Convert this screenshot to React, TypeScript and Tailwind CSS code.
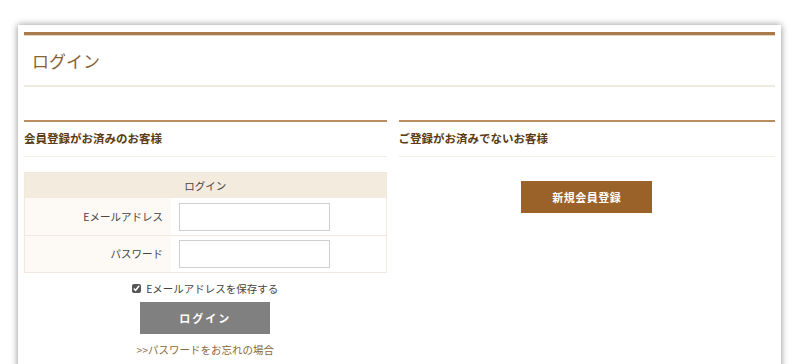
import React from "react";

const jp = { fontFamily: '"Noto Sans CJK JP", "Noto Sans", sans-serif' };

export default function App() {
  return (
    <div className="min-h-[364px] bg-white pt-[25px] overflow-hidden" style={jp}>
      <div className="ml-[18px] w-[763px] bg-white shadow-[0_0_7px_rgba(0,0,0,0.45)] px-[6px] pt-[7px] pb-[40px]">
        {/* Top title */}
        <div className="border-t-[3px] border-[#a97b4c]">
          <div className="h-px bg-[#e6d3bb]" />
          <div className="h-[51px] flex items-center pl-[8px] border-b-2 border-[#efe9df]">
            <h1 className="text-[17px] text-[#8a5f35] font-normal leading-none">ログイン</h1>
          </div>
        </div>

        <div className="flex gap-[12px] mt-[33px]">
          {/* Left column */}
          <div className="w-[363px]">
            <div className="border-t-2 border-[#b98d60] h-[37px] flex items-center border-b border-b-[#f1ede6]">
              <h2 className="text-[11.5px] font-bold text-[#5c3b12] leading-none">会員登録がお済みのお客様</h2>
            </div>
            <div className="mt-[15px] border border-[#f0e9df]">
              <div className="h-[25px] bg-[#f4ebdf] flex items-center justify-center text-[10.5px] text-[#444]">ログイン</div>
              <div className="flex h-[38px] border-b border-[#f0e9df]">
                <div className="w-[146px] bg-[#fdf9f4] flex items-center justify-end pr-[8px] text-[10.5px] text-[#444]">Eメールアドレス</div>
                <div className="flex-1 flex items-center pl-[8px]">
                  <input className="w-[151px] h-[28px] border border-[#cfcfcf] bg-white outline-none" />
                </div>
              </div>
              <div className="flex h-[36px]">
                <div className="w-[146px] bg-[#fdf9f4] flex items-center justify-end pr-[8px] text-[10.5px] text-[#444]">パスワード</div>
                <div className="flex-1 flex items-center pl-[8px]">
                  <input type="password" className="w-[151px] h-[28px] border border-[#cfcfcf] bg-white outline-none" />
                </div>
              </div>
            </div>
            <div className="flex items-center justify-center mt-[8px] gap-[5px] text-[10.5px] text-[#444]">
              <input type="checkbox" defaultChecked className="w-[9px] h-[9px] accent-[#555] m-0" />
              <span>Eメールアドレスを保存する</span>
            </div>
            <div className="flex justify-center mt-[5px]">
              <button className="w-[130px] h-[32px] bg-[#808080] text-white text-[11px] font-bold tracking-[2px]">ログイン</button>
            </div>
            <div className="text-center mt-[8px] text-[10.5px] text-[#8b6a41]">&gt;&gt;パスワードをお忘れの場合</div>
          </div>

          {/* Right column */}
          <div className="w-[377px]">
            <div className="border-t-2 border-[#b98d60] h-[37px] flex items-center border-b border-b-[#f1ede6]">
              <h2 className="text-[11.5px] font-bold text-[#5c3b12] leading-none">ご登録がお済みでないお客様</h2>
            </div>
            <div className="flex justify-center mt-[24px]">
              <button className="w-[131px] h-[32px] bg-[#9a6228] text-white text-[11px] font-bold tracking-[0.5px]">新規会員登録</button>
            </div>
          </div>
        </div>
      </div>
    </div>
  );
}
